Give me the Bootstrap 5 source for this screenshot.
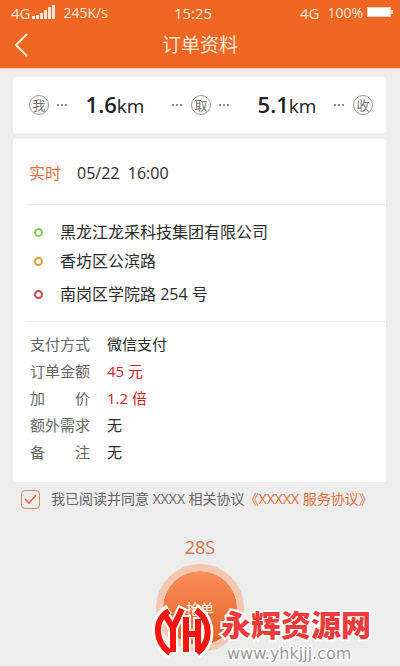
<!DOCTYPE html>
<html lang="zh-CN">
<head>
<meta charset="utf-8">
<meta name="viewport" content="width=device-width, initial-scale=1">
<title>订单资料</title>
<link href="https://cdn.jsdelivr.net/npm/bootstrap@5.3.0/dist/css/bootstrap.min.css" rel="stylesheet">
<style>
  body { background: #ededed; color: #2b2b2b; font-family: "Open Sans", "Noto Sans CJK SC", sans-serif; }
  button { font-family: inherit; }
  .app-header { background: #f16623; border-bottom: 1px solid #fbc9ab; color: #ffe9d6; }
  .status-bar { height: 26px; padding: 0 7px 0 11px; font-size: 15px; line-height: 26px; }
  .status-small { font-size: 14px; }
  .clock { margin-left: 66px; }
  .title-bar { height: 42px; padding: 0 14px; }
  .title-bar h1 { font-size: 19px; line-height: 38px; }
  .side { width: 16px; height: 38px; }
  .panel { border: 0; border-radius: 3px; background: #fff; }
  .main-col { padding: 8px 14px 0 13px; }
  .route { height: 56px; padding: 0 13px 0 16px; margin-bottom: 6px; }
  .stop { width: 20px; height: 20px; border: 1px solid #999; border-radius: 50%; color: #777; font-size: 13px; line-height: 18px; }
  .dots { width: 11px; height: 2px; fill: #8c8c8c; }
  .distance { flex: 1 1 0; font-size: 19px; line-height: 28px; color: #222; }
  .distance strong { font-size: 22px; font-weight: 600; }
  .first-leg { padding-right: 10px; }
  .second-leg { padding-left: 10px; }
  .when { height: 65px; padding: 3px 16px 0; font-size: 16px; }
  .accent { color: #e2713f; }
  .panel > .rule { margin: 0 0 0 13px; border-color: #aaa; }
  .addresses { padding: 13px 16px 12px 21px; font-size: 16px; line-height: 29px; }
  .addresses li { gap: 17px; }
  .ring { width: 9px; height: 9px; border: 2px solid; border-radius: 50%; }
  .ring-green { color: #7fcd56; }
  .ring-amber { color: #e0a032; }
  .ring-red { color: #c94a55; }
  .details { padding: 9px 17px 16px; font-size: 15px; line-height: 27px; }
  .details dt { width: 60px; color: #666; }
  .details div { gap: 17px; }
  .red { color: #cf2229; }
  .agree { padding: 6px 0 0 8px; gap: 11px; font-size: 14px; line-height: 22px; color: #666; }
  .agree .form-check-input { width: 19px; height: 19px; margin: 0; border: 1px solid #dd8663; border-radius: 4px; background-color: transparent; }
  .agree .form-check-input:checked { background-size: 19px; background-image: url("data:image/svg+xml,%3Csvg xmlns='http://www.w3.org/2000/svg' viewBox='0 0 19 19'%3E%3Cpath d='M4 9l4 4 7-8' fill='none' stroke='%23d8683c' stroke-width='1.6'/%3E%3C/svg%3E"); }
  .countdown { padding-top: 24px; font-size: 18px; line-height: 26px; color: #cf7350; }
  .action { padding-bottom: 13px; }
  .grab { display: block; width: 88px; height: 88px; margin: 4px auto 0; border: 7px solid #f4c7b1; border-radius: 50%; background: linear-gradient(#fa8e5c, #e5601f) padding-box; color: #fff0e4; font-size: 14px; }
  .site-mark { left: calc(50% - 46px); bottom: 3px; gap: 9px; pointer-events: none; }
  .site-mark svg { width: 58px; height: 52px; margin-bottom: 4px; overflow: visible; }
  .site-name { font: 900 30px/36px "Noto Sans CJK SC", sans-serif; color: #f03b3d; paint-order: stroke fill; -webkit-text-stroke: 4px #fff; }
  .site-url { padding: 5px 0 0 6px; font: 16px/16px "DejaVu Sans", sans-serif; color: #999; paint-order: stroke fill; -webkit-text-stroke: 3px #fff; }
</style>
</head>
<body>
<header class="app-header">
  <div class="status-bar d-flex align-items-center">
    <span>4G</span>
    <svg width="25" height="17" viewBox="0 0 25 17" fill="currentColor" aria-hidden="true"><path d="M2 11h3v3H2zM6 10h3v4H6zM10 8h3v6h-3zM14 5h3v9h-3zM18 2h3v12h-3zM22 0h3v14h-3z"/></svg>
    <span class="status-small ms-2">245K/s</span>
    <span class="clock">15:25</span>
    <span class="ms-auto">4G</span>
    <span class="status-small ms-2">100%</span>
    <svg class="ms-1" width="26" height="14" viewBox="0 0 26 14" aria-hidden="true"><path d="M0 1h24v3h2v4h-2v3H0z" fill="#ffd3b6"/><path d="M1 2h22v8H1z" fill="#fff"/></svg>
  </div>
  <div class="title-bar d-flex justify-content-between">
    <button class="side btn p-0 border-0 d-flex align-items-center" type="button" aria-label="返回"><svg width="14" height="24" viewBox="0 0 14 24" fill="none" stroke="#ffe9d6" stroke-width="2.2" aria-hidden="true"><path d="M13 1L2 12l11 11"/></svg></button>
    <h1 class="m-0 fw-normal">订单资料</h1>
    <span class="side"></span>
  </div>
</header>
<main class="main-col">
  <section class="card panel route d-flex flex-row align-items-center">
    <span class="stop text-center">我</span>
    <svg class="dots ms-2" viewBox="0 0 11 2"><path d="M0 0h2v2H0zM4 0h2v2H4zM8 0h2v2H8z"/></svg>
    <span class="distance first-leg text-center"><strong>1.6</strong>km</span>
    <svg class="dots me-2" viewBox="0 0 11 2"><path d="M0 0h2v2H0zM4 0h2v2H4zM8 0h2v2H8z"/></svg>
    <span class="stop text-center">取</span>
    <svg class="dots ms-2" viewBox="0 0 11 2"><path d="M0 0h2v2H0zM4 0h2v2H4zM8 0h2v2H8z"/></svg>
    <span class="distance second-leg text-center"><strong>5.1</strong>km</span>
    <svg class="dots me-2" viewBox="0 0 11 2"><path d="M0 0h2v2H0zM4 0h2v2H4zM8 0h2v2H8z"/></svg>
    <span class="stop text-center">收</span>
  </section>
  <section class="card panel">
    <div class="when d-flex align-items-center gap-3"><span class="accent">实时</span><span>05/22&nbsp; 16:00</span></div>
    <hr class="rule">
    <ul class="addresses list-unstyled m-0">
      <li class="d-flex align-items-center"><span class="ring ring-green"></span>黑龙江龙采科技集团有限公司</li>
      <li class="d-flex align-items-center"><span class="ring ring-amber"></span>香坊区公滨路</li>
      <li class="d-flex align-items-center pt-1"><span class="ring ring-red"></span>南岗区学院路 254 号</li>
    </ul>
    <hr class="rule">
    <dl class="details m-0">
      <div class="d-flex"><dt class="fw-normal">支付方式</dt><dd class="m-0">微信支付</dd></div>
      <div class="d-flex"><dt class="fw-normal">订单金额</dt><dd class="m-0 red">45 元</dd></div>
      <div class="d-flex"><dt class="fw-normal d-flex justify-content-between"><span>加</span><span>价</span></dt><dd class="m-0 red">1.2 倍</dd></div>
      <div class="d-flex"><dt class="fw-normal">额外需求</dt><dd class="m-0">无</dd></div>
      <div class="d-flex"><dt class="fw-normal d-flex justify-content-between"><span>备</span><span>注</span></dt><dd class="m-0">无</dd></div>
    </dl>
  </section>
  <div class="agree d-flex align-items-center">
    <input class="form-check-input flex-shrink-0" type="checkbox" id="agree" checked>
    <div class="text-nowrap"><label for="agree">我已阅读并同意 XXXX 相关协议</label><a class="accent text-decoration-none" href="#">《XXXXX 服务协议》</a></div>
  </div>
</main>
<section class="text-center">
  <div class="countdown">28S</div>
  <div class="action position-relative">
    <button class="grab p-0" type="button">抢单</button>
    <div class="site-mark position-absolute d-flex align-items-end text-start">
      <svg viewBox="0 0 58 52" fill="none" aria-hidden="true">
        <path stroke="#fff" stroke-width="10" d="M15 3C-1 13-1 36 16 49M10 7l9 15M29 1L19 22v26M32 9v39M32 28h12M44 11v37M41 2c18 13 17 35 2 46"/>
        <path stroke="#f5150d" stroke-width="6" d="M15 5C0 14 0 35 16 47M11 9l8 13M28 3L19 22v24M32 11v35M32 28h12M44 13v33M42 4c16 12 15 32 1 43"/>
      </svg>
      <div><div class="site-name text-nowrap">永辉资源网</div><div class="site-url">www.yhkjjj.com</div></div>
    </div>
  </div>
</section>
<script src="https://cdn.jsdelivr.net/npm/bootstrap@5.3.0/dist/js/bootstrap.bundle.min.js"></script>
</body>
</html>
